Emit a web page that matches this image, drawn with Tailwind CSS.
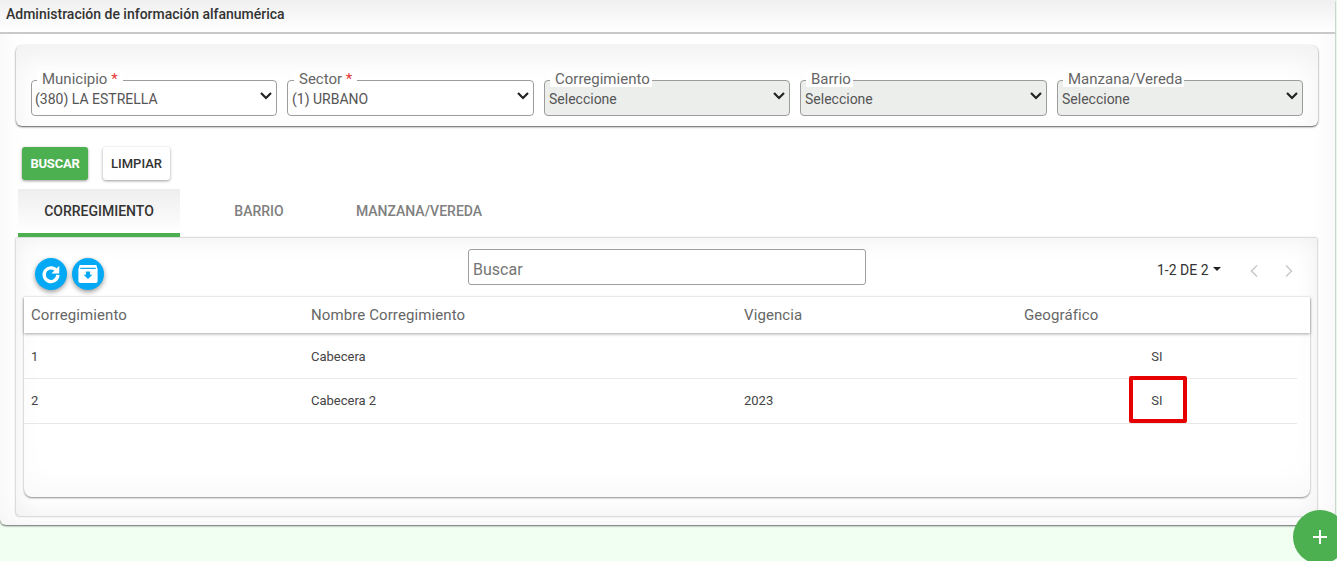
<!DOCTYPE html>
<html lang="es">

<head>
    <meta charset="UTF-8">
    <meta name="viewport" content="width=device-width, initial-scale=1.0">
    <title>Administración de información alfanumérica</title>
    <script src="https://cdn.jsdelivr.net/npm/@tailwindcss/browser@4"></script>
</head>

<body class="bg-[#f1fff3] h-[561px] overflow-hidden relative font-['Roboto',sans-serif] text-[#212529]">

    <!-- Panel principal -->
    <main class="w-[1335px] h-[525px] bg-white rounded-b-md shadow-[0_1px_2px_rgba(0,0,0,0.6),inset_0_0_30px_rgba(0,0,0,0.05)]">
        <header class="h-[34px] px-[6px] pt-[6px] border-b-2 border-[#c9c9c9] text-[14px] leading-4 font-medium text-[#333] bg-gradient-to-b from-[#f0f0f0] to-white">
            Administración de información alfanumérica
        </header>

        <!-- Filtros -->
        <section class="mx-4 mt-[11px] w-[1302px] h-[81px] pt-[35px] px-[15px] flex gap-[10px] rounded-md bg-white shadow-[0_1px_2px_rgba(0,0,0,0.65),inset_0_12px_30px_rgba(0,0,0,0.06)]">
            <div class="relative w-[246px] h-9 border border-[#9c9c9c] rounded-[4px] bg-white">
                <span class="absolute left-[5px] -top-[10px] bg-white px-[5px] text-[15px] leading-4 text-[#666]">Municipio <b class="font-normal text-[#e53935]">*</b></span>
                <select class="appearance-none w-full h-full pl-[3px] pt-[2px] text-[14px] text-[#555] bg-transparent"><option>(380) LA ESTRELLA</option></select>
                <svg class="absolute right-[3px] top-[10px] w-[14px] h-[10px]" viewBox="0 0 14 10" fill="none" stroke="#222" stroke-width="2.2"><path d="M2 2l5 5 5-5"/></svg>
            </div>
            <div class="relative w-[247px] h-9 border border-[#9c9c9c] rounded-[4px] bg-white">
                <span class="absolute left-[6px] -top-[10px] bg-white px-[5px] text-[15px] leading-4 text-[#666]">Sector <b class="font-normal text-[#e53935]">*</b></span>
                <select class="appearance-none w-full h-full pl-1 pt-[2px] text-[14px] text-[#555] bg-transparent"><option>(1) URBANO</option></select>
                <svg class="absolute right-[3px] top-[10px] w-[14px] h-[10px]" viewBox="0 0 14 10" fill="none" stroke="#222" stroke-width="2.2"><path d="M2 2l5 5 5-5"/></svg>
            </div>
            <div class="relative w-[246px] h-9 border border-[#9c9c9c] rounded-[4px] bg-[#eceeec]">
                <span class="absolute left-[5px] -top-[10px] bg-white pl-[5px] pr-[2px] text-[15px] leading-4 text-[#666]">Corregimiento</span>
                <select disabled class="appearance-none w-full h-full pl-1 pt-[2px] text-[14px] text-[#555] opacity-100 bg-transparent"><option>Seleccione</option></select>
                <svg class="absolute right-[3px] top-[10px] w-[14px] h-[10px]" viewBox="0 0 14 10" fill="none" stroke="#222" stroke-width="2.2"><path d="M2 2l5 5 5-5"/></svg>
            </div>
            <div class="relative w-[247px] h-9 border border-[#9c9c9c] rounded-[4px] bg-[#eceeec]">
                <span class="absolute left-[5px] -top-[10px] bg-white pl-[5px] pr-[2px] text-[15px] leading-4 text-[#666]">Barrio</span>
                <select disabled class="appearance-none w-full h-full pl-1 pt-[2px] text-[14px] text-[#555] opacity-100 bg-transparent"><option>Seleccione</option></select>
                <svg class="absolute right-[3px] top-[10px] w-[14px] h-[10px]" viewBox="0 0 14 10" fill="none" stroke="#222" stroke-width="2.2"><path d="M2 2l5 5 5-5"/></svg>
            </div>
            <div class="relative w-[246px] h-9 border border-[#9c9c9c] rounded-[4px] bg-[#eceeec]">
                <span class="absolute left-[5px] -top-[10px] bg-white pl-[5px] pr-[2px] text-[15px] leading-4 text-[#666]">Manzana/Vereda</span>
                <select disabled class="appearance-none w-full h-full pl-1 pt-[2px] text-[14px] text-[#555] opacity-100 bg-transparent"><option>Seleccione</option></select>
                <svg class="absolute right-[3px] top-[10px] w-[14px] h-[10px]" viewBox="0 0 14 10" fill="none" stroke="#222" stroke-width="2.2"><path d="M2 2l5 5 5-5"/></svg>
            </div>
        </section>

        <!-- Botones -->
        <div class="flex gap-[15px] ml-[22px] mt-[21px]">
            <button class="w-[66px] h-[33px] rounded-[3px] bg-[#4caf50] text-white text-[13px] font-bold tracking-[-0.2px] shadow-[0_1px_3px_rgba(0,0,0,0.4)]">BUSCAR</button>
            <button class="w-[67px] h-[33px] rounded-[3px] bg-white text-[#333] text-[13px] font-medium shadow-[0_1px_3px_rgba(0,0,0,0.4)]">LIMPIAR</button>
        </div>

        <!-- Tabs -->
        <nav class="flex ml-[18px] mt-[9px] h-12 w-[1300px] text-[14px] font-medium">
            <a class="w-[162px] flex items-center justify-center pt-[1px] border-b-4 border-[#4caf50] bg-gradient-to-b from-[#eeeeee] to-white text-[#333]">CORREGIMIENTO</a>
            <a class="w-[158px] flex items-center justify-center pb-1 text-[#808080]">BARRIO</a>
            <a class="w-[162px] flex items-center justify-center pb-1 text-[#808080]">MANZANA/VEREDA</a>
        </nav>

        <!-- Tabla -->
        <section class="mx-4 mt-[1px] w-[1301px] h-[278px] px-2 rounded-b-sm bg-white shadow-[0_0_2px_rgba(0,0,0,0.5),inset_0_0_26px_rgba(0,0,0,0.07)]">
            <div class="h-[59px] flex items-start relative">
                <div class="flex gap-[5px] ml-[11px] mt-[20px]">
                    <button class="w-8 h-8 rounded-full bg-[#03a9f4] flex items-center justify-center shadow-[0_2px_5px_rgba(0,0,0,0.4)]">
                        <svg class="w-[22px] h-[22px]" viewBox="0 0 24 24" fill="none" stroke="white" stroke-width="3.6"><path d="M18.500 9A7.500 7.500 0 1 0 19.500 13"/><path d="M21 3v8.500h-8.500z" fill="white" stroke="none"/></svg>
                    </button>
                    <button class="w-8 h-8 rounded-full bg-[#03a9f4] flex items-center justify-center shadow-[0_2px_5px_rgba(0,0,0,0.4)]">
                        <svg class="w-6 h-6" viewBox="0 0 20 20"><path d="M3 2.500h14l1 3.500v10a1.500 1.500 0 0 1-1.500 1.500h-13A1.500 1.500 0 0 1 2 16V6z" fill="white"/><path d="M3.500 5.300h13" stroke="#03a9f4" stroke-width="1"/><path d="M8.300 8h3.400v2.600h2L10 14.200l-3.700-3.600h2z" fill="#03a9f4"/></svg>
                    </button>
                </div>
                <input placeholder="Buscar" class="absolute left-[444px] top-[11px] w-[398px] h-9 px-1 pt-1 border border-[#9e9e9e] rounded-[3px] bg-white text-base placeholder:text-[#757575]">
                <div class="absolute left-[1133px] top-[22px] flex items-center text-[14px] text-[#333]">
                    1-2 DE 2
                    <svg class="ml-1 mb-[3px] w-2 h-1" viewBox="0 0 8 4"><path d="M0 0h8L4 4z" fill="#222"/></svg>
                    <svg class="ml-[28px] w-[10px] h-[14px]" viewBox="0 0 10 14" fill="none" stroke="#c8c8c8" stroke-width="1.5"><path d="M8 1.500L2.500 7 8 12.500"/></svg>
                    <svg class="ml-[25px] w-[10px] h-[14px]" viewBox="0 0 10 14" fill="none" stroke="#c8c8c8" stroke-width="1.5"><path d="M2 1.500L7.500 7 2 12.500"/></svg>
                </div>
            </div>

            <div class="w-[1286px] h-[200px] rounded-b-lg bg-white shadow-[0_1px_2px_rgba(0,0,0,0.45),inset_0_-14px_26px_rgba(0,0,0,0.025)]">
                <div class="grid grid-cols-[280px_433px_280px_293px] h-[36px] items-center bg-white shadow-[0_1px_3px_rgba(0,0,0,0.35)] text-[15px] text-[#666] tracking-[0.1px]">
                    <div class="pl-[7px]">Corregimiento</div>
                    <div class="pl-[7px]">Nombre Corregimiento</div>
                    <div class="pl-[7px]">Vigencia</div>
                    <div class="pl-[7px]">Geográfico</div>
                </div>
                <div class="w-[1273px] grid grid-cols-[280px_433px_280px_280px] h-[46px] pt-[3px] items-center border-b border-[#e8e8e8] text-[13px] text-[#444]">
                    <div class="pl-[7px]">1</div>
                    <div class="pl-[7px]">Cabecera</div>
                    <div class="pl-[7px]"></div>
                    <div class="text-center">SI</div>
                </div>
                <div class="w-[1273px] grid grid-cols-[280px_433px_280px_280px] h-[45px] items-center border-b border-[#e8e8e8] text-[13px] text-[#444]">
                    <div class="pl-[7px]">2</div>
                    <div class="pl-[7px]">Cabecera 2</div>
                    <div class="pl-[7px]">2023</div>
                    <div class="text-center relative">SI
                        <span class="absolute left-[112px] -top-[15px] w-[58px] h-[47px] border-4 border-[#e60000] rounded-[2px]"></span>
                    </div>
                </div>
            </div>
        </section>
    </main>

    <!-- Boton flotante -->
    <button class="absolute left-[1293px] top-[510px] w-[54px] h-[54px] rounded-full bg-[#4caf50] flex items-center justify-center">
        <svg class="w-4 h-4" viewBox="0 0 16 16" stroke="white" stroke-width="2"><path d="M8 1v14M1 8h14"/></svg>
    </button>
</body>

</html>
